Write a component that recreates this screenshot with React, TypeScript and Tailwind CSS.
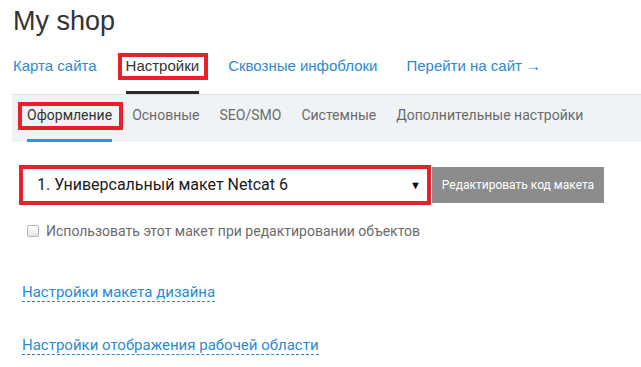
import React from "react";

const topNav = ["Карта сайта", "Настройки", "Сквозные инфоблоки", "Перейти на сайт →"];
const subNav = ["Оформление", "Основные", "SEO/SMO", "Системные", "Дополнительные настройки"];

const App: React.FC = () => {
  return (
    <div className="h-[367px] w-[641px] overflow-hidden bg-white font-['Roboto',sans-serif]">
      <h1 className="pl-[13px] pt-[5px] font-['Liberation_Sans',Arial,sans-serif] text-[27px] leading-[32px] text-[#333]">
        My shop
      </h1>

      {/* top tabs */}
      <div className="mt-[20px] flex gap-[29px] pl-[13px] font-['Liberation_Sans',Arial,sans-serif]">
        {topNav.map((item, i) => (
          <div
            key={item}
            className={
              i === 1
                ? "relative border-b-[3px] border-[#2b2b2b] pb-[16px] text-[15px] leading-[18px] text-[#333]"
                : "border-b-[3px] border-transparent pb-[16px] text-[15px] leading-[18px] text-[#2c8ad0]"
            }
          >
            {item}
            {i === 1 && (
              <span className="absolute -left-[8px] -right-[9px] -top-[4px] bottom-[11px] border-4 border-[#e8202a]" />
            )}
          </div>
        ))}
      </div>

      {/* sub tabs */}
      <div className="ml-[12px] flex gap-[20px] border-t border-[#dcdfe3] bg-[#f0f3f6] pl-[15px] pt-[12px]">
        {subNav.map((item, i) => (
          <div
            key={item}
            className={
              i === 0
                ? "relative border-b-[3px] border-[#2196f3] pb-[15px] text-[14px] leading-[17px] text-[#333]"
                : "border-b-[3px] border-transparent pb-[15px] text-[14px] leading-[17px] text-[#6b6b6b]"
            }
          >
            {item}
            {i === 0 && (
              <span className="absolute -left-[9px] -right-[11px] -top-[5px] bottom-[9px] border-4 border-[#e8202a]" />
            )}
          </div>
        ))}
      </div>

      {/* layout select */}
      <div className="mt-[23px] flex items-center pl-[19px]">
        <div className="flex h-[40px] w-[412px] items-center justify-between border-4 border-[#e8202a] bg-white pl-[14px] pr-[6px]">
          <span className="text-[16px] leading-[20px] text-[#1a1a1a]">1. Универсальный макет Netcat 6</span>
          <span className="text-[11px] leading-none text-black">▼</span>
        </div>
        <button className="ml-px h-[36px] w-[172px] bg-[#8c8c8c] text-[12px] text-white">
          Редактировать код макета
        </button>
      </div>

      <label className="mt-[18px] flex items-center gap-[7px] pl-[27px]">
        <span className="h-[12px] w-[12px] rounded-[2px] border border-[#b5b5b5] bg-gradient-to-b from-white to-[#e6e6e6]" />
        <span className="text-[14px] leading-[16px] text-[#6b6b6b]">
          Использовать этот макет при редактировании объектов
        </span>
      </label>

      <div className="mt-[44px] flex flex-col items-start gap-[34px] pl-[22px]">
        <span className="border-b border-dashed border-[#2c8ad0] text-[15px] leading-[18px] text-[#2c8ad0]">
          Настройки макета дизайна
        </span>
        <span className="border-b border-dashed border-[#2c8ad0] text-[15px] leading-[18px] text-[#2c8ad0]">
          Настройки отображения рабочей области
        </span>
      </div>
    </div>
  );
};

export default App;
